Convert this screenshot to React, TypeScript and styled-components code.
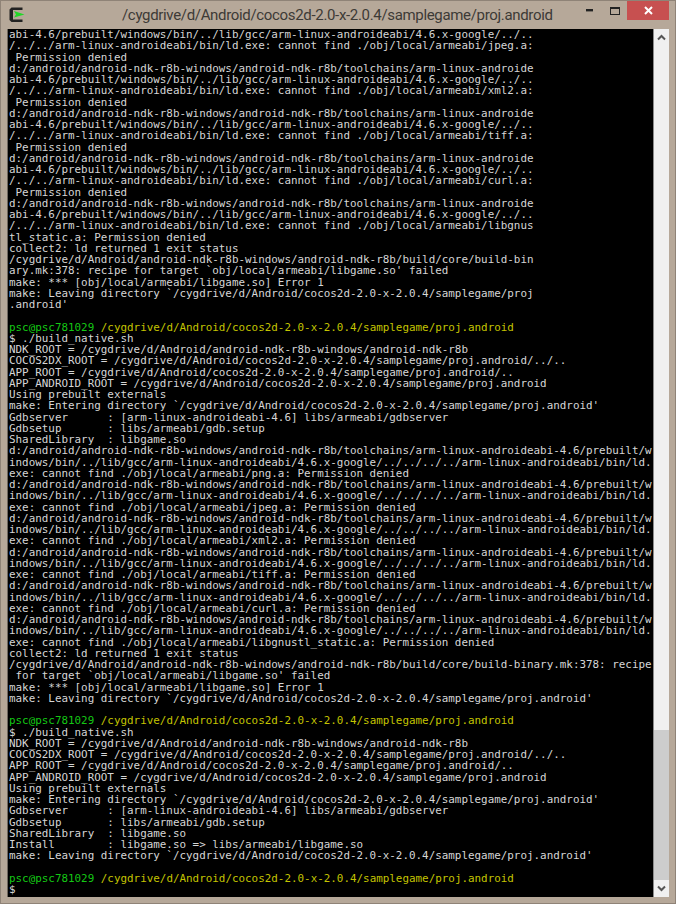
import React from 'react';
import styled, { createGlobalStyle } from 'styled-components';

const Global = createGlobalStyle`
  html, body { margin: 0; padding: 0; background: #b6a899; }
  #root { width: 676px; height: 904px; overflow: hidden; }
`;

const Window = styled.div`
  width: 676px;
  height: 904px;
  box-sizing: border-box;
  display: flex;
  flex-direction: column;
  background: #b6a899;
  border: 1px solid #8f8377;
  padding: 0 6px 6px 6px;
`;

const TitleBar = styled.div`
  height: 28px;
  flex: none;
  display: flex;
  align-items: flex-start;
  position: relative;
`;

const AppIcon = styled.svg`
  width: 16px;
  height: 16px;
  margin: 6px 0 0 2px;
  flex: none;
`;

const Title = styled.div`
  position: absolute;
  left: 115px;
  top: 4px;
  font: 15px/20px Roboto, "Noto Sans", sans-serif;
  letter-spacing: -0.33px;
  color: #3d3a36;
  white-space: nowrap;
`;

const Controls = styled.div`
  margin-left: auto;
  display: flex;
  align-items: flex-start;
`;

const ControlButton = styled.div<{ $close?: boolean }>`
  width: ${p => (p.$close ? '42px' : '25px')};
  height: 19px;
  display: flex;
  align-items: center;
  justify-content: center;
  background: ${p => (p.$close ? '#c75050' : 'transparent')};
`;

const Body = styled.div`
  flex: 1;
  min-height: 0;
  display: flex;
  border-left: 1px solid #6f675f;
`;

const Terminal = styled.pre`
  flex: 1;
  min-width: 0;
  margin: 0;
  padding-left: 1px;
  background: #000;
  color: #d6d6d6;
  font: 10.9px/11.25px "DejaVu Sans Mono", monospace;
  overflow: hidden;
  white-space: pre;
`;

const Green = styled.span`
  color: #14c814;
`;

const Yellow = styled.span`
  color: #c4c400;
`;

const Scrollbar = styled.div`
  width: 16px;
  flex: none;
  display: flex;
  flex-direction: column;
  background: #f0f0f0;
  border-left: 1px solid #8c8c8c;
  box-sizing: border-box;
`;

const Arrow = styled.div`
  height: 17px;
  flex: none;
  display: flex;
  align-items: center;
  justify-content: center;
`;

const Track = styled.div`
  flex: 1;
  display: flex;
  flex-direction: column;
  justify-content: flex-end;
`;

const Thumb = styled.div`
  height: 150px;
  background: #cdcdcd;
`;

const part1 = `abi-4.6/prebuilt/windows/bin/../lib/gcc/arm-linux-androideabi/4.6.x-google/../..
/../../arm-linux-androideabi/bin/ld.exe: cannot find ./obj/local/armeabi/jpeg.a:
 Permission denied
d:/android/android-ndk-r8b-windows/android-ndk-r8b/toolchains/arm-linux-androide
abi-4.6/prebuilt/windows/bin/../lib/gcc/arm-linux-androideabi/4.6.x-google/../..
/../../arm-linux-androideabi/bin/ld.exe: cannot find ./obj/local/armeabi/xml2.a:
 Permission denied
d:/android/android-ndk-r8b-windows/android-ndk-r8b/toolchains/arm-linux-androide
abi-4.6/prebuilt/windows/bin/../lib/gcc/arm-linux-androideabi/4.6.x-google/../..
/../../arm-linux-androideabi/bin/ld.exe: cannot find ./obj/local/armeabi/tiff.a:
 Permission denied
d:/android/android-ndk-r8b-windows/android-ndk-r8b/toolchains/arm-linux-androide
abi-4.6/prebuilt/windows/bin/../lib/gcc/arm-linux-androideabi/4.6.x-google/../..
/../../arm-linux-androideabi/bin/ld.exe: cannot find ./obj/local/armeabi/curl.a:
 Permission denied
d:/android/android-ndk-r8b-windows/android-ndk-r8b/toolchains/arm-linux-androide
abi-4.6/prebuilt/windows/bin/../lib/gcc/arm-linux-androideabi/4.6.x-google/../..
/../../arm-linux-androideabi/bin/ld.exe: cannot find ./obj/local/armeabi/libgnus
tl_static.a: Permission denied
collect2: ld returned 1 exit status
/cygdrive/d/Android/android-ndk-r8b-windows/android-ndk-r8b/build/core/build-bin
ary.mk:378: recipe for target \`obj/local/armeabi/libgame.so' failed
make: *** [obj/local/armeabi/libgame.so] Error 1
make: Leaving directory \`/cygdrive/d/Android/cocos2d-2.0-x-2.0.4/samplegame/proj
.android'
`;

const part2 = `$ ./build_native.sh
NDK_ROOT = /cygdrive/d/Android/android-ndk-r8b-windows/android-ndk-r8b
COCOS2DX_ROOT = /cygdrive/d/Android/cocos2d-2.0-x-2.0.4/samplegame/proj.android/../..
APP_ROOT = /cygdrive/d/Android/cocos2d-2.0-x-2.0.4/samplegame/proj.android/..
APP_ANDROID_ROOT = /cygdrive/d/Android/cocos2d-2.0-x-2.0.4/samplegame/proj.android
Using prebuilt externals
make: Entering directory \`/cygdrive/d/Android/cocos2d-2.0-x-2.0.4/samplegame/proj.android'
Gdbserver      : [arm-linux-androideabi-4.6] libs/armeabi/gdbserver
Gdbsetup       : libs/armeabi/gdb.setup
SharedLibrary  : libgame.so
d:/android/android-ndk-r8b-windows/android-ndk-r8b/toolchains/arm-linux-androideabi-4.6/prebuilt/w
indows/bin/../lib/gcc/arm-linux-androideabi/4.6.x-google/../../../../arm-linux-androideabi/bin/ld.
exe: cannot find ./obj/local/armeabi/png.a: Permission denied
d:/android/android-ndk-r8b-windows/android-ndk-r8b/toolchains/arm-linux-androideabi-4.6/prebuilt/w
indows/bin/../lib/gcc/arm-linux-androideabi/4.6.x-google/../../../../arm-linux-androideabi/bin/ld.
exe: cannot find ./obj/local/armeabi/jpeg.a: Permission denied
d:/android/android-ndk-r8b-windows/android-ndk-r8b/toolchains/arm-linux-androideabi-4.6/prebuilt/w
indows/bin/../lib/gcc/arm-linux-androideabi/4.6.x-google/../../../../arm-linux-androideabi/bin/ld.
exe: cannot find ./obj/local/armeabi/xml2.a: Permission denied
d:/android/android-ndk-r8b-windows/android-ndk-r8b/toolchains/arm-linux-androideabi-4.6/prebuilt/w
indows/bin/../lib/gcc/arm-linux-androideabi/4.6.x-google/../../../../arm-linux-androideabi/bin/ld.
exe: cannot find ./obj/local/armeabi/tiff.a: Permission denied
d:/android/android-ndk-r8b-windows/android-ndk-r8b/toolchains/arm-linux-androideabi-4.6/prebuilt/w
indows/bin/../lib/gcc/arm-linux-androideabi/4.6.x-google/../../../../arm-linux-androideabi/bin/ld.
exe: cannot find ./obj/local/armeabi/curl.a: Permission denied
d:/android/android-ndk-r8b-windows/android-ndk-r8b/toolchains/arm-linux-androideabi-4.6/prebuilt/w
indows/bin/../lib/gcc/arm-linux-androideabi/4.6.x-google/../../../../arm-linux-androideabi/bin/ld.
exe: cannot find ./obj/local/armeabi/libgnustl_static.a: Permission denied
collect2: ld returned 1 exit status
/cygdrive/d/Android/android-ndk-r8b-windows/android-ndk-r8b/build/core/build-binary.mk:378: recipe
 for target \`obj/local/armeabi/libgame.so' failed
make: *** [obj/local/armeabi/libgame.so] Error 1
make: Leaving directory \`/cygdrive/d/Android/cocos2d-2.0-x-2.0.4/samplegame/proj.android'
`;

const part3 = `$ ./build_native.sh
NDK_ROOT = /cygdrive/d/Android/android-ndk-r8b-windows/android-ndk-r8b
COCOS2DX_ROOT = /cygdrive/d/Android/cocos2d-2.0-x-2.0.4/samplegame/proj.android/../..
APP_ROOT = /cygdrive/d/Android/cocos2d-2.0-x-2.0.4/samplegame/proj.android/..
APP_ANDROID_ROOT = /cygdrive/d/Android/cocos2d-2.0-x-2.0.4/samplegame/proj.android
Using prebuilt externals
make: Entering directory \`/cygdrive/d/Android/cocos2d-2.0-x-2.0.4/samplegame/proj.android'
Gdbserver      : [arm-linux-androideabi-4.6] libs/armeabi/gdbserver
Gdbsetup       : libs/armeabi/gdb.setup
SharedLibrary  : libgame.so
Install        : libgame.so => libs/armeabi/libgame.so
make: Leaving directory \`/cygdrive/d/Android/cocos2d-2.0-x-2.0.4/samplegame/proj.android'
`;

const Prompt = () => (
  <>
    <Green>psc@psc781029</Green> <Yellow>/cygdrive/d/Android/cocos2d-2.0-x-2.0.4/samplegame/proj.android</Yellow>
    {'\n'}
  </>
);

export default function App() {
  return (
    <Window>
      <Global />
      <TitleBar>
        <AppIcon viewBox="0 0 16 16">
          <path d="M2.5 0.5H13.5V3H4V12.5H13.5V15H2.5L0.5 13V2.5Z" fill="#222" />
          <path d="M5 4L15.5 7.5L5 10.5L7 7.5Z" fill="#22d828" />
        </AppIcon>
        <Title>/cygdrive/d/Android/cocos2d-2.0-x-2.0.4/samplegame/proj.android</Title>
        <Controls>
          <ControlButton>
            <svg width="7" height="3" viewBox="0 0 7 3"><rect width="7" height="2.4" fill="#222" /></svg>
          </ControlButton>
          <ControlButton>
            <svg width="10" height="8" viewBox="0 0 10 8"><rect x="0.5" y="0.5" width="9" height="7" fill="none" stroke="#222" /><rect width="10" height="2" fill="#222" /></svg>
          </ControlButton>
          <ControlButton $close>
            <svg width="9" height="9" viewBox="0 0 9 9"><path d="M1 1l7 7M8 1l-7 7" stroke="#fff" strokeWidth="2" /></svg>
          </ControlButton>
        </Controls>
      </TitleBar>
      <Body>
        <Terminal>
          {part1}
          {'\n'}
          <Prompt />
          {part2}
          {'\n'}
          <Prompt />
          {part3}
          {'\n'}
          <Prompt />
          {'$'}
        </Terminal>
        <Scrollbar>
          <Arrow>
            <svg width="9" height="7" viewBox="0 0 9 7"><path d="M1 5.5l3.5-3.5L8 5.5" fill="none" stroke="#555" strokeWidth="2" /></svg>
          </Arrow>
          <Track><Thumb /></Track>
          <Arrow>
            <svg width="9" height="7" viewBox="0 0 9 7"><path d="M1 1.5l3.5 3.5L8 1.5" fill="none" stroke="#555" strokeWidth="2" /></svg>
          </Arrow>
        </Scrollbar>
      </Body>
    </Window>
  );
}
